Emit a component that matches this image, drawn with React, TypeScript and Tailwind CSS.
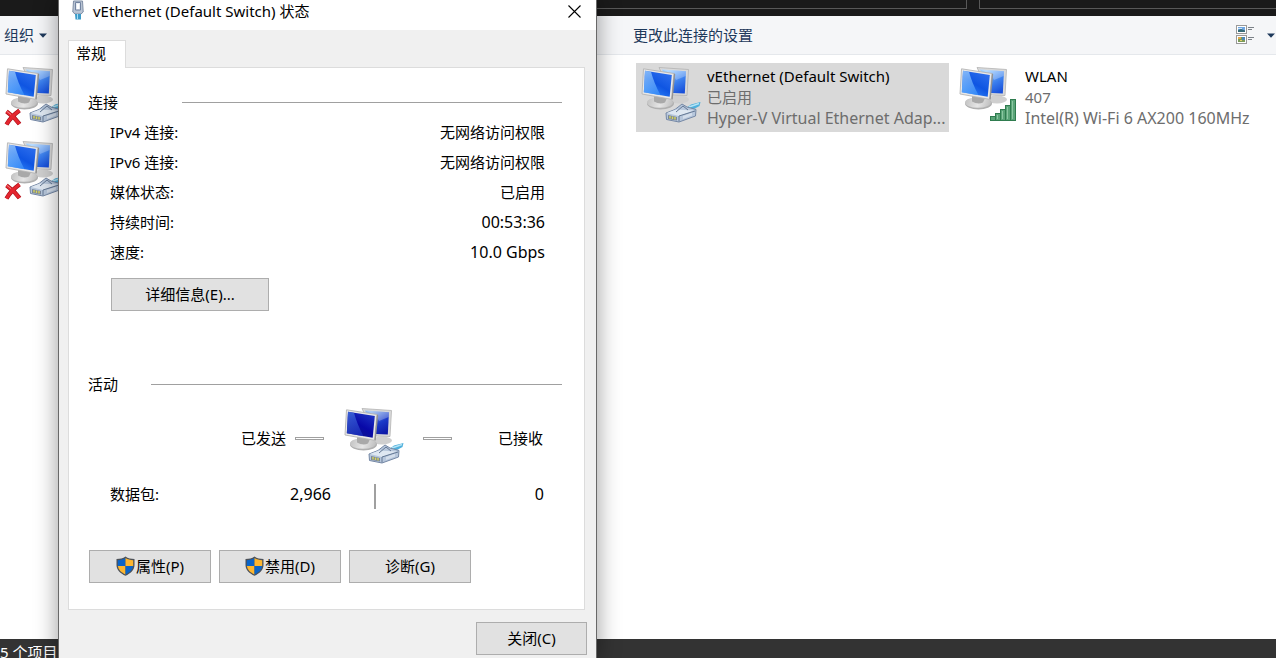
import type { ReactNode } from "react";

type Badge = "plug" | "unplugged" | "wifi" | "idle";

function Plug() {
  return (
    <g>
      <path d="M45 43 L51 38.500 L60.500 36 L59.500 40 L53 43.500 L47 46Z" fill="#4fb0dc" />
      <path d="M49 41 L59 37.500" stroke="#b5e4f6" strokeWidth="1.400" />
      <path d="M26 47 L35 43.500 L42 38 L47 41 L56 43.500 L55.500 50 L39 56 L26.500 53.500Z" fill="#b7c7dc" stroke="#7588a5" strokeWidth="1" />
      <path d="M27 47 L36 43.500 L53.500 44.500 L39 50Z" fill="#dfe8f2" />
      <path d="M36 46 L43 40 L48 44 M39 50 V55.500 M39 50 L55 45" stroke="#647894" strokeWidth="1" fill="none" />
      <path d="M43 50 L52 46.800 V49.500 L43 53Z" fill="#d4deeb" />
      <path d="M28 49 L37 51 V54.500 L28 53Z" fill="#7b8798" />
      <path d="M30 50 V52.500 M32.500 50.500 V53 M35 51 V53.500" stroke="#d8d45b" strokeWidth="1.400" />
    </g>
  );
}

function NetworkIcon({ id, badge }: { id: string; badge: Badge }) {
  const idle = badge === "idle";
  return (
    <svg width="62" height="62" viewBox="0 0 62 62" fill="none" aria-hidden="true" className="shrink-0">
      <defs>
        <linearGradient id={id + "-front"} x1="10" y1="30" x2="24" y2="6" gradientUnits="userSpaceOnUse">
          <stop offset="0" stopColor={idle ? "#0f1787" : "#2f86f8"} />
          <stop offset=".5" stopColor={idle ? "#0808a8" : "#0f55e2"} />
          <stop offset="1" stopColor={idle ? "#1b2fc0" : "#2a6cec"} />
        </linearGradient>
        <linearGradient id={id + "-gloss"} x1="4" y1="4" x2="16" y2="29" gradientUnits="userSpaceOnUse">
          <stop offset="0" stopColor={idle ? "#4a7be0" : "#a9d6ff"} />
          <stop offset="1" stopColor={idle ? "#1a2fc0" : "#3f93fa"} />
        </linearGradient>
        <linearGradient id={id + "-back"} x1="30" y1="4" x2="44" y2="28" gradientUnits="userSpaceOnUse">
          <stop offset="0" stopColor={idle ? "#91b9ef" : "#9fcfff"} />
          <stop offset=".5" stopColor={idle ? "#1b39c8" : "#3c80ee"} />
          <stop offset="1" stopColor={idle ? "#0b12a0" : "#1046d6"} />
        </linearGradient>
        <linearGradient id={id + "-base"} x1="8" y1="34" x2="32" y2="42" gradientUnits="userSpaceOnUse">
          <stop stopColor="#c4c4c4" />
          <stop offset=".5" stopColor="#e6e6e6" />
          <stop offset="1" stopColor="#bdbdbd" />
        </linearGradient>
      </defs>
      <ellipse cx="39" cy="33.500" rx="10" ry="4" fill="#cfcfcf" />
      <path d="M19 1.500 L48.500 3.500 L47 29.500 L32 29Z" fill="#d9d9d9" stroke="#b2b2b2" strokeWidth=".8" />
      <path d="M22 3.500 L46 5.200 L44.800 27.500 L33 27Z" fill={`url(#${id}-back)`} />
      <path d="M22 3.500 L46 5.200 L45.700 10 L36 14 L33 8Z" fill="#fff" opacity=".25" />
      <ellipse cx="20.500" cy="37.500" rx="13.500" ry="6" fill="#b0b0b0" />
      <ellipse cx="20" cy="36.500" rx="13" ry="5.300" fill={`url(#${id}-base)`} />
      <path d="M14 30 L27 32 L25 36.500 Q20 39 14 35.500Z" fill="#a9a9a9" />
      <path d="M3.500 2.800 L34 7.500 L31.500 33.300 L2 28Z" fill="#e8e8e8" stroke="#b4b4b4" strokeWidth=".9" />
      <path d="M34 7.500 L35.200 8 L32.700 33.500 L31.500 33.300Z" fill="#929292" />
      <path d="M5 4.800 L31.800 8.900 L29.700 30.800 L3.800 26.300Z" fill={`url(#${id}-front)`} />
      <path d="M5 4.800 L11 5.700 Q14 17 20.500 29.200 L3.800 26.300Z" fill={`url(#${id}-gloss)`} opacity=".75" />
      {(badge === "plug" || badge === "idle" || badge === "unplugged") && <Plug />}
      {badge === "unplugged" && (
        <g>
          <path d="M2.500 45.500 Q10 50.500 15.500 58 M15.500 44.500 Q7 50.500 2.500 58.500" stroke="#a50f18" strokeWidth="4.400" />
          <path d="M2.500 45.500 Q10 50.500 15.500 58 M15.500 44.500 Q7 50.500 2.500 58.500" stroke="#e4262f" strokeWidth="3.200" />
          <path d="M3 45.500 L7 48.500" stroke="#f68084" strokeWidth="1" />
        </g>
      )}
      {badge === "wifi" && (
        <g fill="#5aa478" stroke="#2f7c4f" strokeWidth="1">
          <rect x="32.500" y="50.500" width="5" height="4" />
          <rect x="37.500" y="47.500" width="5" height="7" />
          <rect x="42.500" y="43.500" width="5" height="11" />
          <rect x="47.500" y="39.500" width="5" height="15" />
          <rect x="52.500" y="33.500" width="5" height="21" />
          <path d="M39.500 49 V53 M44.500 45 V53 M49.500 41 V53 M54.500 35 V53" stroke="#8cc7a2" />
        </g>
      )}
    </svg>
  );
}

function Shield() {
  return (
    <svg width="19" height="20" viewBox="0 0 19 20" aria-hidden="true" className="mr-px shrink-0">
      <path d="M9.500 .5 C7 2.300 4 3 .5 3 V9 C.5 14 4.500 17.500 9.500 19.800 C14.500 17.500 18.500 14 18.500 9 V3 C15 3 12 2.300 9.500 .5Z" fill="#4c5158" />
      <path d="M9.500 2 C7.200 3.500 4.800 4 1.800 4.200 V10 H9.500Z" fill="#0a64c8" />
      <path d="M9.500 2 C11.800 3.500 14.200 4 17.200 4.200 V10 H9.500Z" fill="#fdb62f" />
      <path d="M1.900 10 H9.500 V18.500 C5.300 16.500 2.300 13.800 1.900 10Z" fill="#fdb62f" />
      <path d="M17.100 10 H9.500 V18.500 C13.700 16.500 16.700 13.800 17.100 10Z" fill="#0a64c8" />
    </svg>
  );
}

function Caret() {
  return (
    <svg width="8" height="5" viewBox="0 0 8 5" aria-hidden="true" className="shrink-0">
      <path d="M0 .5 H8 L4 4.800Z" fill="#1e395b" />
    </svg>
  );
}

function ViewIcon() {
  return (
    <svg width="19" height="20" viewBox="0 0 19 20" aria-hidden="true" className="shrink-0">
      <rect x=".5" y=".5" width="10" height="8" fill="#fff" stroke="#999" />
      <rect x=".5" y="10.500" width="10" height="8" fill="#fff" stroke="#999" />
      <rect x="2" y="2" width="7" height="5" fill="#6fa6e2" />
      <path d="M2 5 L5 4 L9 5.500 V7 H2Z" fill="#366b78" />
      <path d="M2 3.500 H6" stroke="#cde3f7" />
      <rect x="2" y="12" width="7" height="5" fill="#7c9b58" />
      <rect x="2" y="12" width="3" height="2" fill="#e0a74a" />
      <rect x="6" y="12" width="3" height="3" fill="#4e86b4" />
      <path d="M4 15.500 H6" stroke="#e7d06c" />
      <path d="M12 2.500 H18 M12 4.500 H16 M12 12.500 H18 M12 14.500 H16" stroke="#7c8288" />
    </svg>
  );
}

function AdapterIcon() {
  return (
    <svg width="12" height="20" viewBox="0 0 12 20" aria-hidden="true" className="shrink-0">
      <path d="M1.500 1 H10.500 L11.200 12 L9 14 H3 L.8 12Z" fill="#b9c4d4" stroke="#7f8ea5" />
      <path d="M3.500 2.500 H8.500 V10 H3.500Z" fill="#e6ecf3" stroke="#7283a0" />
      <path d="M5 4 H7 V9 H5Z" fill="#fff" />
      <path d="M3 14 H9 V19.500 H3.500Z" fill="#3c9bc9" />
      <path d="M5.500 14 V19" stroke="#a5def4" />
    </svg>
  );
}

function Connection({ id, badge, label, selected, className, children }: {
  id: string;
  badge: Badge;
  label?: string;
  selected?: boolean;
  className: string;
  children?: ReactNode;
}) {
  return (
    <li className={className}>
      <button
        type="button"
        aria-label={label}
        className={`flex h-[69px] w-full items-start gap-[5px] pt-[3px] pl-1 text-left leading-[21px] ${selected ? "bg-[#d9d9d9]" : ""}`}
      >
        <NetworkIcon id={id} badge={badge} />
        <span className="flex min-w-0 flex-col whitespace-nowrap text-[#6d6d6d]">{children}</span>
      </button>
    </li>
  );
}

function DialogButton({ className, children }: { className: string; children: ReactNode }) {
  return (
    <button
      type="button"
      className={`flex h-[33px] items-center justify-center border border-[#adadad] bg-[#e1e1e1] pb-[2px] ${className}`}
    >
      {children}
    </button>
  );
}

function Section({ title, gap, children }: { title: string; gap: string; children: ReactNode }) {
  return (
    <section>
      <div className={`flex items-center ${gap}`}>
        <h2>{title}</h2>
        <div className="h-px flex-1 bg-[#a0a0a0]" />
      </div>
      {children}
    </section>
  );
}

const details = [
  { name: "IPv4 连接:", value: "无网络访问权限" },
  { name: "IPv6 连接:", value: "无网络访问权限" },
  { name: "媒体状态:", value: "已启用" },
  { name: "持续时间:", value: "00:53:36", numeric: true },
  { name: "速度:", value: "10.0 Gbps", numeric: true },
];

function StatusDialog() {
  return (
    <div
      role="dialog"
      aria-labelledby="dialog-title"
      className="absolute top-0 bottom-0 left-[58px] w-[539px] border-x border-[#686868] bg-[#f0f0f0] leading-[30px] shadow-[0_0_20px_2px_rgba(0,0,0,0.35)]"
    >
      <header className="flex h-[30px] items-start bg-white pr-[15px] pl-[13px] leading-[22px]">
        <AdapterIcon />
        <h1 id="dialog-title" className="ml-[9px] flex-1">vEthernet (Default Switch) 状态</h1>
        <button type="button" aria-label="关闭" className="mt-[5px]">
          <svg width="13" height="13" viewBox="0 0 13 13" aria-hidden="true">
            <path d="M.5 .5 L12.500 12.500 M12.500 .5 L.5 12.500" stroke="#000" strokeWidth="1.100" />
          </svg>
        </button>
      </header>
      <div className="pt-[10px] pr-[11px] pl-[9px]">
        <div role="tablist" className="relative z-10 -mb-px flex">
          <button type="button" role="tab" aria-selected="true" className="h-7 border border-b-0 border-[#dcdcdc] bg-white pr-[19px] pb-[2px] pl-[7px] leading-[25px]">
            常规
          </button>
        </div>
        <div role="tabpanel" className="border border-[#dcdcdc] bg-white pt-[19px] pr-[22px] pb-[26px] pl-[19px]">
          <Section title="连接" gap="gap-16">
            <dl className="pr-[17px] pl-[22px]">
              {details.map(({ name, value, numeric }) => (
                <div key={name} className="flex justify-between">
                  <dt>{name}</dt>
                  <dd className={numeric ? "text-[16px] leading-[30px]" : ""}>{value}</dd>
                </div>
              ))}
            </dl>
            <DialogButton className="mt-[11px] ml-[23px] w-[158px]">详细信息(E)...</DialogButton>
          </Section>
          <div className="pt-[58px]">
            <Section title="活动" gap="gap-[33px]">
              <div className="mt-[9px] flex h-[60px] items-center pr-[19px] pl-[153px]">
                <span>已发送</span>
                <span className="ml-[9px] h-[3px] w-[29px] border border-[#a0a0a0]" />
                <span className="mr-[18px] ml-[19px] flex">
                  <NetworkIcon id="activity" badge="idle" />
                </span>
                <span className="h-[3px] w-[29px] border border-[#a0a0a0]" />
                <span className="ml-auto">已接收</span>
              </div>
              <div className="mt-[11px] flex items-end pr-[18px] pl-[22px]">
                <span className="flex w-[221px] justify-between">
                  <span>数据包:</span>
                  <span className="text-[16px] leading-[30px]">2,966</span>
                </span>
                <span className="ml-[43px] h-[25px] w-[2px] bg-[#a0a0a0]" />
                <span className="ml-auto text-[16px] leading-[30px]">0</span>
              </div>
            </Section>
          </div>
          <div className="mt-[41px] ml-px flex gap-2">
            <DialogButton className="w-[122px]"><Shield />属性(P)</DialogButton>
            <DialogButton className="w-[122px]"><Shield />禁用(D)</DialogButton>
            <DialogButton className="w-[122px]">诊断(G)</DialogButton>
          </div>
        </div>
      </div>
      <div className="flex justify-end pt-3 pr-[9px]">
        <DialogButton className="w-[111px]">关闭(C)</DialogButton>
      </div>
    </div>
  );
}

export default function App() {
  return (
    <div className="relative flex h-screen flex-col overflow-hidden bg-white font-['Noto_Sans','Noto_Sans_CJK_SC',sans-serif] text-[15px] text-black">
      <div className="flex h-4 shrink-0 gap-3 bg-[#1a1a1a] pb-[7px] pl-[100px]">
        <div className="w-[867px] border-r border-b border-[#585858]" />
        <div className="flex-1 border-b border-l border-[#585858]" />
      </div>
      <nav className="flex h-[39px] shrink-0 items-center border-b border-[#e5e8ec] bg-[#f5f6f8] pl-1 text-[#1e395b]">
        <button type="button" className="flex w-[629px] items-center gap-[5px]">
          组织<Caret />
        </button>
        <button type="button">更改此连接的设置</button>
        <button type="button" aria-label="更改视图" className="ml-auto flex items-center gap-3 pr-px">
          <ViewIcon />
          <Caret />
        </button>
      </nav>
      <main className="flex-1 pt-2">
        <ul className="grid grid-cols-[repeat(4,313px)] gap-[5px]">
          <Connection id="first" badge="unplugged" label="以太网" className="col-start-1" />
          <Connection id="vethernet" badge="plug" selected className="col-start-3">
            <span className="text-black">vEthernet (Default Switch)</span>
            <span>已启用</span>
            <span className="text-[16px] leading-[21px]">Hyper-V Virtual Ethernet Adap...</span>
          </Connection>
          <Connection id="wlan" badge="wifi" className="col-start-4">
            <span className="text-black">WLAN</span>
            <span>407</span>
            <span className="text-[16px] leading-[21px]">Intel(R) Wi-Fi 6 AX200 160MHz</span>
          </Connection>
          <Connection id="second" badge="unplugged" label="以太网" className="col-start-1" />
        </ul>
      </main>
      <footer className="h-[19px] shrink-0 bg-[#333333] leading-[26px] text-white">5 个项目</footer>
      <StatusDialog />
    </div>
  );
}
